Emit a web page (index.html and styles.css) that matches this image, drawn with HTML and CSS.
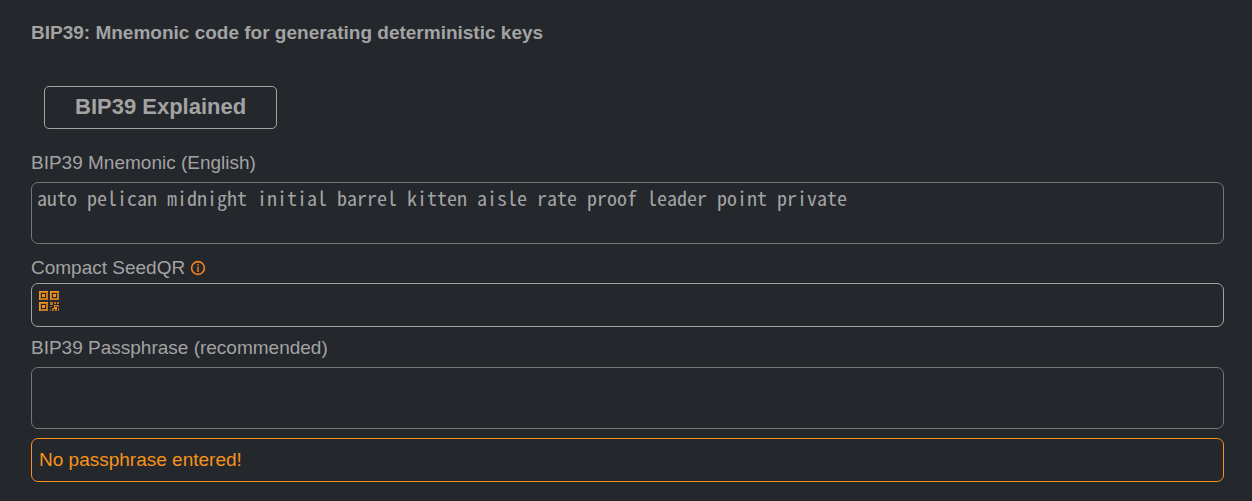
FILE: index.html
```html
<!DOCTYPE html>
<html lang="en">
<head>
<meta charset="utf-8">
<title>BIP39</title>
<link rel="stylesheet" href="styles.css">
</head>
<body>
<main class="panel">
  <h1 class="title">BIP39: Mnemonic code for generating deterministic keys</h1>
  <button class="explain" type="button">BIP39 Explained</button>
  <label class="label" for="mnemonic">BIP39 Mnemonic (English)</label>
  <textarea class="box area" id="mnemonic" spellcheck="false">auto pelican midnight initial barrel kitten aisle rate proof leader point private</textarea>
  <div class="label label-tight">Compact SeedQR
    <svg class="info" viewBox="0 0 16 16" aria-hidden="true"><circle cx="8" cy="8" r="6.4" fill="none" stroke="currentColor" stroke-width="1.6"/><path d="M7.3 4h1.4v1.5H7.3zM7.3 6.5h1.4v5.5H7.3z" fill="currentColor"/></svg>
  </div>
  <div class="box row">
    <button class="qr" type="button" aria-label="Show QR">
      <svg class="qr-icon" viewBox="0 0 20 20" aria-hidden="true" shape-rendering="crispEdges">
        <path d="M1 1h7v7H1zM12 1h7v7h-7zM1 12h7v7H1z" fill="none" stroke="#c47a20" stroke-width="2"/>
        <path d="M3 3h4v4H3zM14 3h4v4h-4zM3 14h4v4H3z" fill="#24272c"/>
        <path d="M3 3h3v3H3zM14 3h3v3h-3zM3 14h3v3H3z" fill="#f7931a"/>
        <path d="M0 0h9v1H0zM0 0h1v9H0zM11 0h9v1h-9zM11 0h1v9h-1zM0 11h9v1H0zM0 11h1v9H0z" fill="#f7931a"/>
        <path d="M2 2h5v1H2zM2 2h1v5H2zM13 2h5v1h-5zM13 2h1v5h-1zM2 13h5v1H2zM2 13h1v5H2z" fill="#24272c"/>
        <path d="M11 11h3v3h-3zM15 11h2v2h-2zM18 11h2v2h-2zM11 15h2v1h-2zM13 17h2v3h-2zM11 18h1v2h-1zM16 18h2v2h-2zM18 14h2v2h-2zM19 17h1v3h-1z" fill="#b87020"/>
        <path d="M15 14h3v1h-2v1h2v2h-3z" fill="#f7931a"/>
      </svg>
    </button>
  </div>
  <label class="label" for="passphrase">BIP39 Passphrase (recommended)</label>
  <textarea class="box area" id="passphrase"></textarea>
  <div class="box row warning" role="status">No passphrase entered!</div>
</main>
</body>
</html>
```
FILE: styles.css
```css
* { box-sizing: border-box; }

body {
  margin: 0;
  background: #24272c;
  color: #a3a3a3;
  font: 19px/24px "Liberation Sans", Arial, sans-serif;
}

.panel {
  display: flex;
  flex-direction: column;
  padding: 21px 28px 19px 31px;
}

.title {
  margin: 0 0 41px;
  font-size: 19px;
  line-height: 24px;
}

.explain {
  align-self: flex-start;
  margin: 0 13px 22px;
  padding: 0 30px 2px;
  height: 43px;
  border: 1px solid #a3a3a3;
  border-radius: 5px;
  background: transparent;
  color: inherit;
  font: bold 22px/24px "Liberation Sans", Arial, sans-serif;
}

.label { margin-bottom: 7px; }

.label-tight { margin-bottom: 3px; }

.box {
  border: 1px solid #a3a3a3;
  border-radius: 7px;
  background: transparent;
  color: inherit;
}

.area {
  display: block;
  width: 100%;
  height: 62px;
  margin: 0 0 12px;
  padding: 3px 5px;
  border-color: #767676;
  resize: none;
  outline: none;
  font: 20px/24px "Noto Sans Mono CJK SC", "Liberation Mono", monospace;
}

.row {
  display: flex;
  min-height: 44px;
  padding: 7px;
  margin-bottom: 9px;
}

.info {
  width: 16px;
  height: 16px;
  color: #f7831a;
  vertical-align: -2px;
}

.qr {
  width: 20px;
  height: 20px;
  padding: 0;
  border: 0;
  background: none;
}

.qr-icon {
  display: block;
  width: 100%;
  height: 100%;
}

#passphrase { margin-bottom: 9px; }

.warning {
  margin-bottom: 0;
  padding: 9px 7px;
  border-color: #f7931a;
  color: #f7931a;
}
```
